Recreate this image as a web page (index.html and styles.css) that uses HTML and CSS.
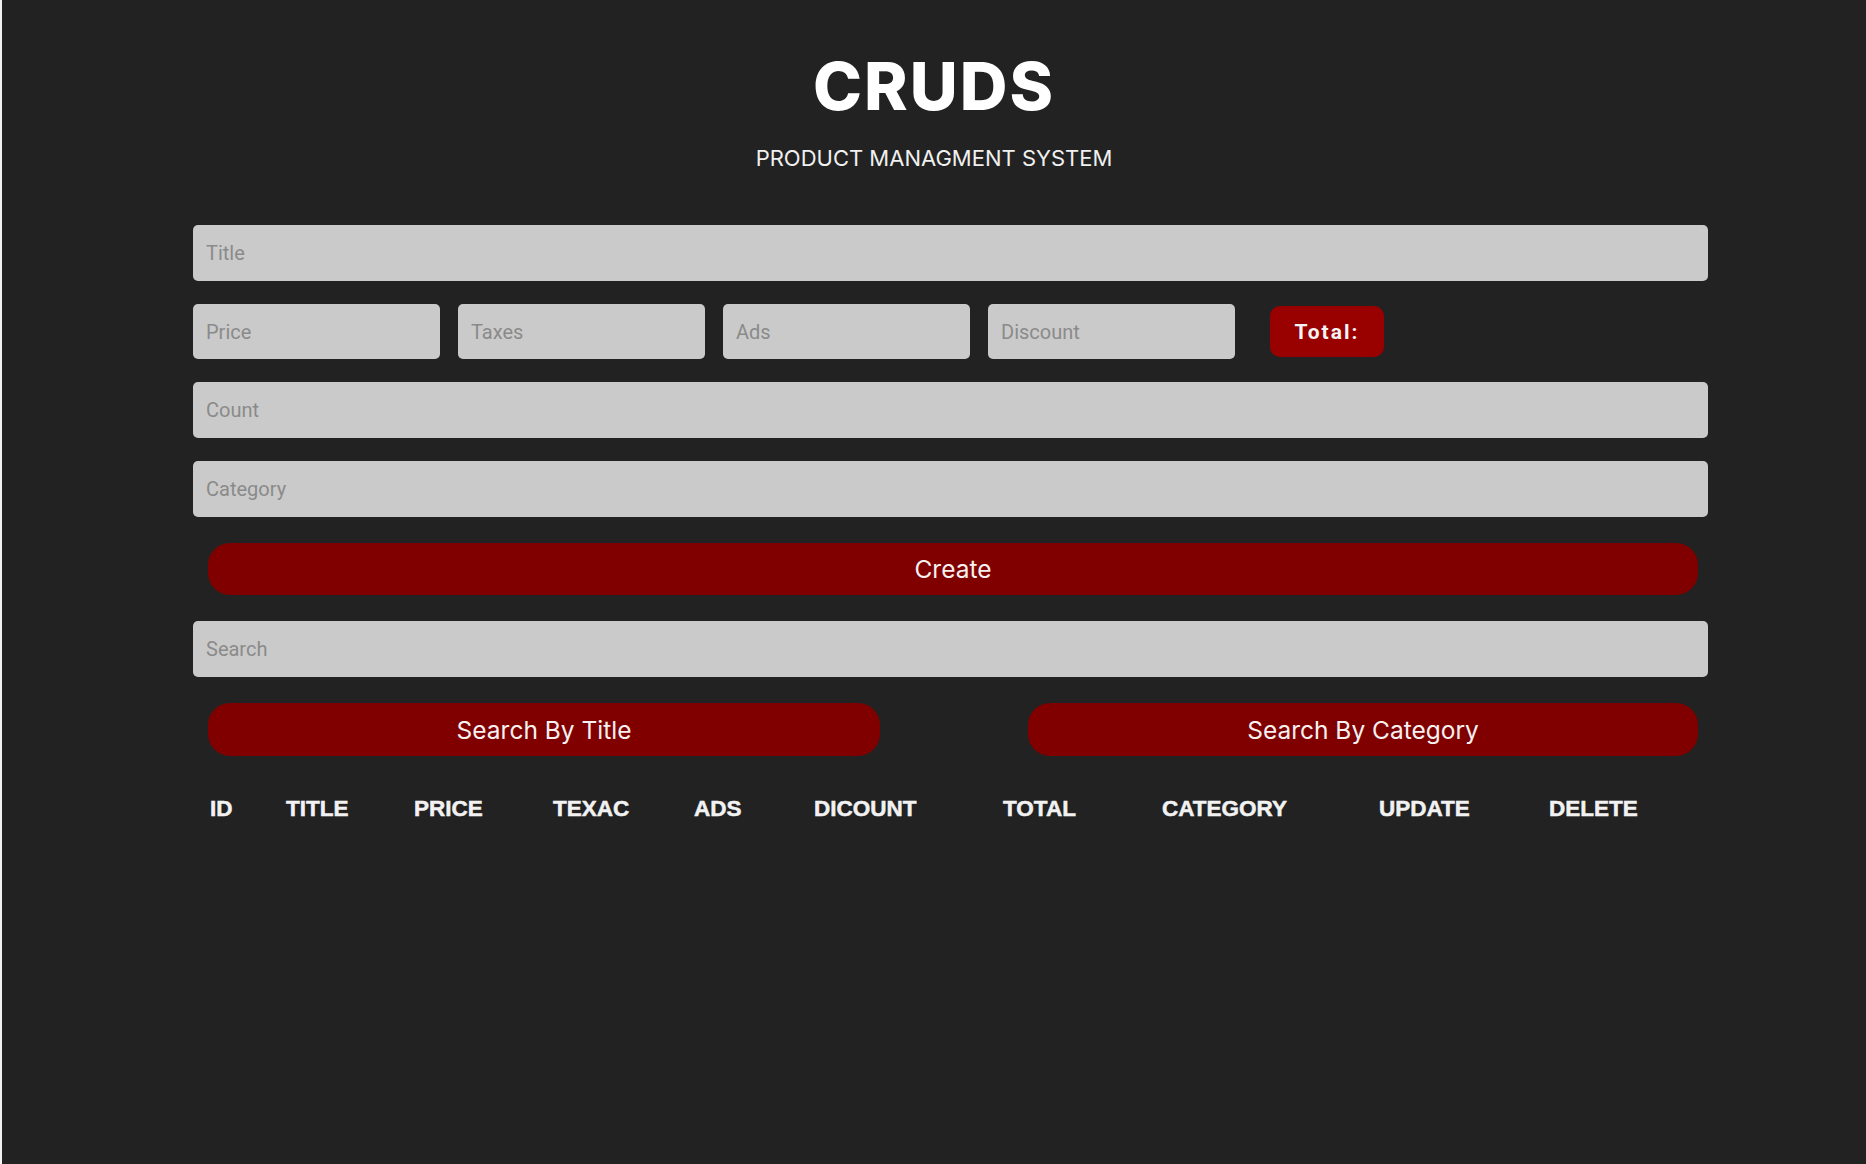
FILE: index.html
```html
<!DOCTYPE html>
<html lang="en">
<head>
<meta charset="utf-8">
<title>CRUDS</title>
<link rel="stylesheet" href="styles.css">
</head>
<body>
<header class="head">
  <h1 class="title">CRUDS</h1>
  <p class="sub">PRODUCT MANAGMENT SYSTEM</p>
</header>
<main class="crud">
  <input class="field" type="text" placeholder="Title">
  <div class="price-row">
    <input class="field small" type="number" placeholder="Price">
    <input class="field small" type="number" placeholder="Taxes">
    <input class="field small" type="number" placeholder="Ads">
    <input class="field small" type="number" placeholder="Discount">
    <small class="total">Total:</small>
  </div>
  <input class="field" type="number" placeholder="Count">
  <input class="field" type="text" placeholder="Category">
  <button class="btn create">Create</button>
  <input class="field" type="text" placeholder="Search">
  <div class="search-row">
    <button class="btn half">Search By Title</button>
    <button class="btn half">Search By Category</button>
  </div>
  <div class="thead">
    <span>ID</span>
    <span>TITLE</span>
    <span>PRICE</span>
    <span>TEXAC</span>
    <span>ADS</span>
    <span>DICOUNT</span>
    <span>TOTAL</span>
    <span>CATEGORY</span>
    <span>UPDATE</span>
    <span>DELETE</span>
  </div>
</main>
</body>
</html>
```
FILE: styles.css
```css
html, body {
  height: 100%;
}
body {
  margin: 0;
  background: #222222;
  border-left: 2px solid #f2f2f2;
  color: #f4f4f4;
  font-family: Inter, "Noto Sans", sans-serif;
  box-sizing: border-box;
}
.head {
  padding-top: 53px;
  text-align: center;
}
.title {
  margin: 0;
  font: 800 66px/66px Inter, sans-serif;
  letter-spacing: 2px;
  color: #ffffff;
}
.sub {
  margin: 26px 0 0;
  font: 400 22px/26px Inter, sans-serif;
  color: #f0f0f0;
}
.crud {
  margin: 54px 0 0 191px;
  width: 1515px;
  display: flex;
  flex-direction: column;
}
.field {
  box-sizing: border-box;
  width: 100%;
  height: 56px;
  margin: 0 0 23px;
  padding: 0 13px;
  border: none;
  border-radius: 5px;
  background: #cacaca;
  font: 400 20px Roboto, sans-serif;
  color: #333;
  outline: none;
}
.field::placeholder {
  color: #8a8a8a;
}
.price-row {
  display: flex;
  align-items: center;
  gap: 18px;
  margin-bottom: 23px;
}
.field.small {
  width: 247px;
  height: 55px;
  margin: 0;
}
.total {
  margin-left: 17px;
  width: 114px;
  height: 51px;
  display: flex;
  align-items: center;
  justify-content: center;
  background: #990000;
  border-radius: 10px;
  font: 700 21px Roboto, sans-serif;
  letter-spacing: 2px;
  color: #f4f4f4;
}
.btn {
  height: 52px;
  border: none;
  border-radius: 22px;
  background: #800000;
  color: #f6f0f0;
  font: 400 24.5px Inter, sans-serif;
  cursor: pointer;
}
.create {
  margin: 3px 10px 26px 15px;
}
.search-row {
  display: flex;
  justify-content: space-between;
  padding: 0 10px 0 15px;
  margin-top: 3px;
}
.half {
  width: 672px;
  height: 53px;
}
.half + .half {
  width: 670px;
}
.thead {
  display: grid;
  grid-template-columns: 76px 128px 139px 141px 120px 189px 159px 217px 170px auto;
  padding-left: 17px;
  margin-top: 39px;
  font: 700 22.5px/28px "Liberation Sans", Arial, sans-serif;
  -webkit-text-stroke: 0.5px #f2f2f2;
  color: #f2f2f2;
}
```
